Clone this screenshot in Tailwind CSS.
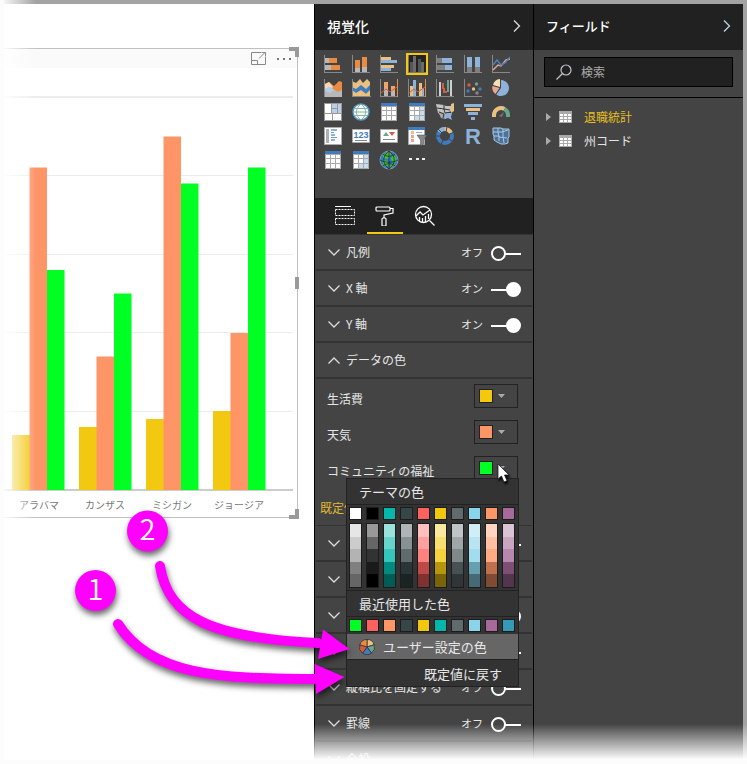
<!DOCTYPE html>
<html lang="ja">
<head>
<meta charset="utf-8">
<meta name="viewport" content="width=device-width, initial-scale=1">
<title>視覚化</title>
<script src="https://cdn.jsdelivr.net/npm/@tailwindcss/browser@4"></script>
</head>
<body class="bg-white font-['Noto_Sans_CJK_JP','Noto_Sans',sans-serif] text-[12px] text-[#e6e6e6]">
<div class="relative flex h-screen overflow-hidden border-t-4 border-r-4 border-[#a3a3a3]">

  <!-- Report canvas -->
  <main class="min-w-0 flex-1 bg-white">
    <section class="relative mt-11 mr-4 border-y border-r border-[#c0c0c0]" aria-label="集合縦棒グラフ">
      <div class="flex h-[19px] items-center justify-end gap-2 bg-[#fafafa] pr-1">
        <button aria-label="フォーカス モード" class="block">
          <svg width="16" height="13" viewBox="0 0 16 13" fill="none" stroke="#888"><path d="M10 .5H.5v12h14V5M.5 8.500h6v4M8 6.500l6-6M10.500.5h4v4"/></svg>
        </button>
        <button aria-label="その他のオプション" class="block">
          <svg width="18" height="4" viewBox="0 0 18 4" fill="#777"><path d="M2 1h2v2H2zM8 1h2v2H8zM14 1h2v2h-2z"/></svg>
        </button>
      </div>
      <svg class="block w-full" viewBox="0 68 297 449">
        <g fill="#ececec"><path d="M0 96h293v2H0zM0 175h293v1H0zM0 254h293v1H0zM0 332h293v1H0zM0 411h293v1H0z"/></g>
        <path d="M0 489h293v2H0z" fill="#ccc"/>
        <g fill="#f2c811"><path d="M12 435h18v55H12zM79 427h18v63H79zM146 419h18v71h-18zM213 411h18v79h-18z"/></g>
        <g fill="#fd9567"><path d="M29.500 167.500H47V490H29.500zM96.500 356.500H114V490H96.500zM163.500 136.500H181V490h-17.500zM230.500 333H248v157h-17.500z"/></g>
        <g fill="#00ff22"><path d="M47 270h17.500v220H47zM114 293.500h17.500V490H114zM181 183.500h17.500V490H181zM248 167.500h17.500V490H248z"/></g>
        <g fill="#777" font-size="10" text-anchor="middle"><text x="39" y="509">アラバマ</text><text x="105" y="509">カンザス</text><text x="172" y="509">ミシガン</text><text x="239" y="509">ジョージア</text></g>
      </svg>
      <span class="absolute -top-[2px] -right-[2px] size-[10px] border-t-4 border-r-4 border-[#999]"></span>
      <span class="absolute top-1/2 -right-[2px] h-3 w-1 -translate-y-1/2 bg-[#999]"></span>
      <span class="absolute -right-[2px] -bottom-[2px] size-[10px] border-r-4 border-b-4 border-[#999]"></span>
    </section>
  </main>

  <!-- Visualizations pane -->
  <aside class="relative w-[219px] shrink-0 border-l border-black bg-[#444]">
    <header class="flex h-[46px] items-center justify-between bg-[#212121] px-3 pb-[2px]">
      <h2 class="text-[14px] font-medium text-white">視覚化</h2>
      <button aria-label="折りたたむ"><svg width="8" height="12" viewBox="0 0 8 12" fill="none" stroke="#ddd" stroke-width="1.300"><path d="M1 .5 6.500 6 1 11.500"/></svg></button>
    </header>

    <div class="grid grid-cols-[repeat(7,28px)] auto-rows-[24px] place-items-center pt-[2px] pb-[26px] pl-1 [&_svg]:block [&_svg]:size-[18px]">
      <button aria-label="積み上げ横棒"><svg viewBox="0 0 18 18"><path d="M0 0h1v17h17v1H0z" fill="#888"/><path d="M1 3h4v5H1zM1 10h6v5H1z" fill="#b8b8b8"/><path d="M5 3h8v5H5zM7 10h9v5H7z" fill="#e98c43"/></svg></button>
      <button aria-label="積み上げ縦棒"><svg viewBox="0 0 18 18"><path d="M0 0h1v17h17v1H0z" fill="#888"/><path d="M3 13h5v4H3zM10 12h5v5h-5z" fill="#b8b8b8"/><path d="M3 5h5v8H3zM10 2h5v10h-5z" fill="#e98c43"/></svg></button>
      <button aria-label="集合横棒"><svg viewBox="0 0 18 18"><path d="M0 0h1v17h17v1H0z" fill="#888"/><path d="M1 2h10v3H1zM1 10h13v3H1z" fill="#ebc182"/><path d="M1 5h16v3H1zM1 13h10v3H1z" fill="#8eb3da"/></svg></button>
      <button aria-label="集合縦棒" aria-pressed="true" class="border-2 border-[#f2c811] bg-[#222]"><svg viewBox="0 0 18 18"><path d="M0 0h1v17h17v1H0z" fill="#777"/><path d="M2 7h3v10H2zM10 4h3v13h-3z" fill="#555"/><path d="M5 1h3v16H5zM13 7h3v10h-3z" fill="#6b6b6b"/></svg></button>
      <button aria-label="100% 積み上げ横棒"><svg viewBox="0 0 18 18"><path d="M0 0h1v17h17v1H0z" fill="#888"/><path d="M1 3h5v5H1zM1 10h8v5H1z" fill="#808080"/><path d="M6 3h10v5H6zM9 10h7v5H9z" fill="#8eb3da"/></svg></button>
      <button aria-label="100% 積み上げ縦棒"><svg viewBox="0 0 18 18"><path d="M0 0h1v17h17v1H0z" fill="#888"/><path d="M3 12h5v5H3zM11 12h5v5h-5z" fill="#808080"/><path d="M3 2h5v10H3zM11 2h5v10h-5z" fill="#8eb3da"/></svg></button>
      <button aria-label="折れ線"><svg viewBox="0 0 18 18" fill="none"><path d="M0 0h1v17h17v1H0z" fill="#888"/><path d="m1 15 5-5 3 1 5-6 4-1" stroke="#e9a48f" stroke-width="1.500"/><path d="m1 10 4-5 4 5 4-2 5-6" stroke="#4a80be" stroke-width="1.500"/></svg></button>

      <button aria-label="面"><svg viewBox="0 0 18 18"><path d="M0 0h1v18H0z" fill="#888"/><path d="M1 5 5 3l5 4 5-5 3 1v13H1z" fill="#e98c43"/><path d="m1 5 4-2 4 5-3 4-5 2z" fill="#f6d9b4"/><path d="m1 10 5-2 5 3 3 2 4-2v7H1z" fill="#b8b8b8"/><path d="m1 10 5-2 4 3-4 3-5-2z" fill="#b2cde8"/></svg></button>
      <button aria-label="リボン"><svg class="overflow-visible" viewBox="0 0 18 18"><path d="M0 2 4 4l4-4 3 4 4-4 3 3v15H0z" fill="#ebc182"/><path d="m0 8 4 2 5-4 5 4 4-4v5l-4 4-5-4-5 3-4-3z" fill="#417bbd"/><path d="m0 12 4 3 5-3 5 3 4-3v5H0z" fill="#ebc182"/><path d="M0 0h1v17h18v1H0z" fill="#888"/></svg></button>
      <button aria-label="折れ線と積み上げ縦棒"><svg viewBox="0 0 18 18"><path d="M0 0h1v17h16v1H0z" fill="#888"/><path d="M17 0h1v18h-1z" fill="#e98c43"/><path d="M4 10h4v7H4zM11 12h4v5h-4z" fill="#b8b8b8"/><path d="M4 3h4v7H4zM11 7h4v5h-4z" fill="#efa36d"/><path d="m1 14 5-4 4 3 7-5" fill="none" stroke="#da5d3b"/></svg></button>
      <button aria-label="折れ線と集合縦棒"><svg viewBox="0 0 18 18"><path d="M0 0h1v17h16v1H0z" fill="#888"/><path d="M17 0h1v18h-1z" fill="#e98c43"/><path d="M2 7h3v10H2zM11 4h3v13h-3z" fill="#ebc182"/><path d="M5 1h3v16H5zM14 9h2v8h-2z" fill="#8eb3da"/><path d="m1 14 5-4 4 3 7-5" fill="none" stroke="#da5d3b"/></svg></button>
      <button aria-label="ウォーターフォール"><svg viewBox="0 0 18 18"><path d="M0 0h1v17h17v1H0z" fill="#888"/><path d="M3 3h2v14H3zM14 1h2v16h-2z" fill="#cfcfcf"/><path d="M6 4h2v6H6zM7 9h2v5H7z" fill="#d65b42"/><path d="M11 1h2v12h-2z" fill="#68a68e"/><path d="M9 12h2v2H9z" fill="#d65b42"/></svg></button>
      <button aria-label="散布図"><svg viewBox="0 0 18 18"><path d="M0 0h1v17h17v1H0z" fill="#888"/><circle cx="5" cy="6" r="1.700" fill="#d65b42"/><circle cx="12.500" cy="5" r="1.700" fill="#68a68e"/><circle cx="4" cy="12" r="1.700" fill="#417bbd"/><circle cx="9.500" cy="10" r="1.700" fill="#ebc182"/><circle cx="16" cy="10" r="1.700" fill="#417bbd"/><circle cx="13" cy="14" r="1.700" fill="#888"/></svg></button>
      <button aria-label="円"><svg viewBox="0 0 18 18"><path d="M9 9V1a8 8 0 1 1-4.700 14.500z" fill="#8eb3da"/><path d="M8 8V0A8 8 0 0 0 1 6z" fill="#f6dfb5"/><path d="M7.500 9 .5 7a8 8 0 0 0 3 8z" fill="#eda48e"/></svg></button>

      <button aria-label="ツリーマップ"><svg viewBox="0 0 18 18"><path d="M0 0h18v18H0z" fill="#999"/><path d="M1 1h6v9H1zM1 11h7v6H1zM9 11h8v6H9z" fill="#fff"/><path d="M8 1h5v4H8zM14 1h3v9h-3zM8 6h5v4H8z" fill="#b9cee8"/></svg></button>
      <button aria-label="マップ"><svg viewBox="0 0 18 18"><circle cx="9" cy="9" r="8" fill="#fff" stroke="#4f94c6" stroke-width="1.500"/><path d="M2 5.500h14M1 9h16M2 12.500h14M9 1C3 5 3 13 9 17M9 1c6 4 6 12 0 16" fill="none" stroke="#80b6a1"/></svg></button>
      <button aria-label="テーブル"><svg viewBox="0 0 18 18"><path d="M1 0h16v18H1z" fill="#aaa"/><path d="M1 0h16v3H1z" fill="#417bbd"/><path d="M2 4h4v3H2zM7 4h4v3H7zM12 4h4v3h-4zM2 8h4v4H2zM7 8h4v4H7zM12 8h4v4h-4zM2 13h4v4H2zM7 13h4v4H7zM12 13h4v4h-4z" fill="#fff"/></svg></button>
      <button aria-label="マトリックス"><svg viewBox="0 0 18 18"><path d="M1 0h16v18H1z" fill="#aaa"/><path d="M1 0h16v3H1z" fill="#417bbd"/><path d="M2 4h4v3H2zM7 4h4v3H7zM2 8h4v4H2zM7 8h4v4H7zM2 13h4v4H2z" fill="#fff"/><path d="M12 4h4v3h-4zM12 8h4v4h-4zM7 13h4v4H7zM12 13h4v4h-4z" fill="#c9dcee"/></svg></button>
      <button aria-label="塗り分け地図"><svg viewBox="0 0 18 18"><path d="m0 1 8 1 2 1h6v5l-5 2-4 3-5-3z" fill="#c4c4c4"/><path d="m2 8 7 2 1 6-5-1z" fill="#aaa"/><path d="m9 10 7 0-1 4 1 3-4-2-3 1z" fill="#8eb3da"/><path d="m15 1 3-1v8l-3 2z" fill="#ebc182"/><path d="m1 5 7 1 1 4 6-1M8 2v4l6 1M3 9l5 2-1 4" stroke="#333" fill="none"/></svg></button>
      <button aria-label="じょうご"><svg viewBox="0 0 18 18"><path d="M0 1h18v3H0zM4 9h10v3H4zM7 14h4v3H7z" fill="#8eb3da"/><path d="M2 5h14v3H2z" fill="#ebc182"/></svg></button>
      <button aria-label="ゲージ"><svg viewBox="0 0 18 18" fill="none"><path d="M2 14v-2a7 7 0 0 1 10.500-6" stroke="#ebc182" stroke-width="4"/><path d="M12.500 6a7 7 0 0 1 3.500 6v2" stroke="#68a68e" stroke-width="4"/><path d="m7 13 5-4-2 5z" fill="#777"/></svg></button>

      <button aria-label="複数の行カード"><svg viewBox="0 0 18 18"><path d="M.5.5h17v17H.5z" fill="#fff" stroke="#aaa"/><path d="M2 2h3v14H2z" fill="#b0b0b0"/><path d="M7 2h6v2H7zM7 7h4v2H7zM7 12h4v2H7z" fill="#8eb3da"/><path d="M7 5h3v1H7zM7 10h6v1H7z" fill="#6a9bcf"/></svg></button>
      <button aria-label="カード"><svg viewBox="0 0 18 18"><path d="M.5 2.500h17v13H.5z" fill="#fff" stroke="#aaa"/><text x="9" y="11" text-anchor="middle" font-family="Liberation Sans" font-weight="bold" font-size="9" fill="#417bbd">123</text><path d="M3 13h12v1H3z" fill="#888"/></svg></button>
      <button aria-label="KPI"><svg viewBox="0 0 18 18"><path d="M.5 2.500h17v13H.5z" fill="#fff" stroke="#aaa"/><path d="m3 9 3-4 3 4z" fill="#68a68e"/><path d="m9 5 3 4 3-4z" fill="#d65b42"/><path d="M3 12h12v1H3z" fill="#888"/></svg></button>
      <button aria-label="スライサー"><svg class="overflow-visible" viewBox="0 0 18 18"><path d="M.5.500h16v17H.5z" fill="#fff" stroke="#aaa"/><path d="M0 0h17v3H0z" fill="#417bbd"/><path d="M3 4h3v3H3z" fill="#ebc182"/><path d="M3 8h3v3H3z" fill="#eda48e"/><path d="M3 12h3v3H3z" fill="#eda48e"/><path d="M8 5h6v1H8z" fill="#8eb3da"/><path d="M9 8h10l-3.500 5v4l-3 2v-6z" fill="#888" stroke="#444" stroke-width=".5"/></svg></button>
      <button aria-label="ドーナツ"><svg viewBox="0 0 18 18" fill="none" stroke-width="4"><circle cx="9" cy="9" r="7" stroke="#417bbd"/><path d="M9 2a7 7 0 0 1 6 4" stroke="#ebc182"/><path d="M3 5a7 7 0 0 1 6-3" stroke="#8eb3da"/><path d="m10 5 1-5M12 8l6-3M13 12l4 3M7 13l-2 5M5 9H0M6 6 2 2" stroke="#444" stroke-width="1"/></svg></button>
      <button aria-label="R スクリプト"><svg class="overflow-visible" viewBox="0 0 18 18"><text x="9" y="17" text-anchor="middle" font-family="Liberation Sans" font-weight="bold" font-size="22" fill="#8eb3da">R</text></svg></button>
      <button aria-label="図形マップ"><svg viewBox="0 0 18 18"><path d="M1 1h8l2 1h6v8l-1 1v5l-3 1-4 0-4-2-3-2V9L1 7z" fill="#4f7398" stroke="#a8c8e8"/><path d="M1 5h9l6-2M6 1v4l1 5 8 1M2 9h5v5M11 2v8l1 6" fill="none" stroke="#a8c8e8"/></svg></button>

      <button aria-label="テーブル 2"><svg viewBox="0 0 18 18"><path d="M1 0h16v18H1z" fill="#aaa"/><path d="M1 0h16v3H1z" fill="#417bbd"/><path d="M2 4h4v3H2zM7 4h4v3H7zM12 4h4v3h-4zM2 8h4v4H2zM7 8h4v4H7zM12 8h4v4h-4zM2 13h4v4H2zM7 13h4v4H7zM12 13h4v4h-4z" fill="#fff"/></svg></button>
      <button aria-label="マトリックス 2"><svg viewBox="0 0 18 18"><path d="M1 0h16v18H1z" fill="#aaa"/><path d="M1 0h16v3H1z" fill="#417bbd"/><path d="M2 4h4v3H2zM7 4h4v3H7zM2 8h4v4H2zM7 8h4v4H7zM2 13h4v4H2z" fill="#fff"/><path d="M12 4h4v3h-4zM12 8h4v4h-4zM7 13h4v4H7zM12 13h4v4h-4z" fill="#c9dcee"/></svg></button>
      <button aria-label="ArcGIS マップ"><svg class="overflow-visible" viewBox="0 0 18 18"><circle cx="9" cy="9" r="9" fill="#2a7fc9" stroke="#bbb" stroke-width=".6"/><path d="m3 4 4-3 4 1-1 4-3 2-4-1zM12 3l4 3 1 5-4 1-2-4zM3 9l5 1 1 4-3 2-3-3zM11 12l4 1-3 4-2-1z" fill="#4fb83a"/><path d="M3 3c3 3 9 3 12 0M0 9c5 3 13 3 18 0M3 15c3-3 9-3 12 0M9 0v18M9 0C2 5 2 13 9 18M9 0c7 5 7 13 0 18" fill="none" stroke="#111" stroke-width=".6"/></svg></button>
      <button aria-label="その他"><svg viewBox="0 0 18 18" fill="#eee"><path d="M1 7h3v2H1zM8 7h3v2H8zM14 7h3v2h-3z"/></svg></button>
    </div>

    <div class="flex h-9 gap-1 bg-[#212121] pl-3" role="tablist">
      <button role="tab" aria-label="フィールド" class="grid w-9 place-items-center"><svg width="20" height="20" viewBox="0 0 20 20" fill="none" stroke="#fff"><path d="M0 .5h16"/><path d="M.5 3.500h19v6H.5zM.5 12.500h19v6H.5z" stroke-dasharray="2 1"/></svg></button>
      <button role="tab" aria-label="書式" aria-selected="true" class="grid w-9 place-items-center border-b-2 border-[#f2c811] pt-[2px]"><svg width="20" height="20" viewBox="0 0 20 20" fill="none" stroke="#fff" stroke-width="1.200"><rect x="1" y="1" width="14" height="4" rx="1"/><path d="M15 2.500h3v4.500l-9 2v3"/><rect x="7" y="12" width="4" height="8" rx="1"/></svg></button>
      <button role="tab" aria-label="分析" class="grid w-9 place-items-center"><svg width="22" height="22" viewBox="0 0 22 22" fill="none" stroke="#fff" stroke-width="1.300"><circle cx="9.500" cy="9.500" r="8"/><path d="m15.500 15.500 5 5M2 11l4-4 3 3 7-5M5.500 16v-4M8.500 17v-4M11.500 17v-6M14.500 14v-5"/></svg></button>
    </div>

    <div class="mx-px border-t border-[#333]">
      <div id="sections-top"></div>
      <div id="data-colors"></div>
      <a href="#" class="block h-[39px] border-b border-[#333] pl-1 leading-[42px] text-[#e0b82e]">既定値に戻す</a>
      <div id="sections-bottom"></div>
    </div>

    <!-- Colour picker -->
    <div class="absolute top-[474px] left-[31px] w-[173px] border border-[#222] bg-[#333] text-[13px] leading-[25px]" role="menu">
      <h3 class="border-b border-[#222] pl-3">テーマの色</h3>
      <div id="theme" class="flex gap-1 px-[2px] pt-[2px]"></div>
      <div id="shades" class="flex gap-1 px-[2px] pt-[3px] pb-[2px]"></div>
      <h3 class="border-y border-[#222] pl-3">最近使用した色</h3>
      <div id="recent" class="flex gap-1 px-[2px] pt-[2px] pb-[2px]"></div>
      <button role="menuitem" class="flex h-[26px] w-full items-center gap-2 border-b border-[#222] bg-[#666] pl-3">
        <svg width="16" height="16" viewBox="-8 -8 16 16" stroke="#333" stroke-width=".8"><path d="M0 0V-7.600A7.600 7.600 0 0 1 7.200-2.300z" fill="#ebc182"/><path d="M0 0 7.200-2.300A7.600 7.600 0 0 1 4.500 6.100z" fill="#68a68e"/><path d="M0 0 4.500 6.100A7.600 7.600 0 0 1-4.500 6.100z" fill="#417bbd"/><path d="M0 0-4.500 6.100A7.600 7.600 0 0 1-7.200-2.300z" fill="#d65b42"/><path d="M0 0-7.200-2.300A7.600 7.600 0 0 1 0-7.600z" fill="#e98c43"/></svg>
        ユーザー設定の色
      </button>
      <button role="menuitem" class="block h-[26px] w-full pr-4 text-right">既定値に戻す</button>
    </div>
    <svg class="absolute top-[459px] left-[182px] drop-shadow-[1px_2px_1px_#000]" width="14" height="20" viewBox="0 0 14 20"><path d="M1 1v15l3.500-3 2.500 6 3-1.300-2.500-5.700H12z" fill="#fff" stroke="#223" stroke-width=".8"/></svg>
  </aside>

  <!-- Fields pane -->
  <aside class="w-[210px] shrink-0 border-l border-black bg-[#444]">
    <header class="flex h-[46px] items-center justify-between bg-[#212121] px-3 pb-[2px]">
      <h2 class="text-[13px] font-medium text-white">フィールド</h2>
      <button aria-label="折りたたむ"><svg width="8" height="12" viewBox="0 0 8 12" fill="none" stroke="#b9d2e8" stroke-width="1.300"><path d="M1 .5 6.500 6 1 11.500"/></svg></button>
    </header>
    <div class="border-b border-black px-[10px] pt-[7px] pb-[10px]">
      <label class="flex h-[30px] items-center gap-[9px] border border-black bg-[#212121] pl-[11px]">
        <svg class="shrink-0" width="16" height="16" viewBox="0 0 16 16" fill="none" stroke="#c0c6cc" stroke-width="1.200"><circle cx="10" cy="6" r="5"/><path d="M6.500 9.500.5 15.500"/></svg>
        <input type="search" aria-label="検索" placeholder="検索" class="w-full min-w-0 bg-transparent outline-none placeholder:text-[#aaa]">
      </label>
    </div>
    <ul class="pt-[7px]">
      <li class="flex h-6 items-center pl-3">
        <svg width="5" height="8" viewBox="0 0 5 8" fill="#aaa"><path d="m0 0 5 4-5 4z"/></svg>
        <svg class="mr-3 ml-2" width="13" height="12" viewBox="0 0 13 12"><path d="M0 0h13v12H0z" fill="#aaa"/><path d="M1 3h3v2H1zM5 3h3v2H5zM9 3h3v2H9zM1 6h3v2H1zM5 6h3v2H5zM9 6h3v2H9zM1 9h3v2H1zM5 9h3v2H5zM9 9h3v2H9z" fill="#fff"/></svg>
        <span class="text-[#e6bf1e]">退職統計</span>
      </li>
      <li class="flex h-6 items-center pl-3">
        <svg width="5" height="8" viewBox="0 0 5 8" fill="#aaa"><path d="m0 0 5 4-5 4z"/></svg>
        <svg class="mr-3 ml-2" width="13" height="12" viewBox="0 0 13 12"><path d="M0 0h13v12H0z" fill="#aaa"/><path d="M1 3h3v2H1zM5 3h3v2H5zM9 3h3v2H9zM1 6h3v2H1zM5 6h3v2H5zM9 6h3v2H9zM1 9h3v2H1zM5 9h3v2H5zM9 9h3v2H9z" fill="#fff"/></svg>
        <span>州コード</span>
      </li>
    </ul>
  </aside>
</div>

<!-- Faded page edges -->
<div class="pointer-events-none absolute inset-y-0 left-0 w-9 bg-linear-to-r from-white to-white/0"></div>
<div class="pointer-events-none absolute inset-x-0 bottom-1 h-9 bg-linear-to-b from-white/0 to-white"></div>
<div class="pointer-events-none absolute inset-x-0 bottom-0 h-1 bg-[#fcfcfc]"></div>
<div class="pointer-events-none absolute inset-y-0 left-0 w-1 bg-[#fcfcfc]"></div>

<!-- Callouts -->
<svg class="pointer-events-none absolute top-0 left-0 drop-shadow-[1px_4px_3px_rgba(0,0,0,0.6)]" width="360" height="764" viewBox="0 0 360 764" fill="#f0f">
  <circle cx="147.500" cy="531" r="20.500"/>
  <circle cx="95.500" cy="590.500" r="20.500"/>
  <g fill="none" stroke="#f0f" stroke-width="10" stroke-linecap="round"><path d="M160 566C168 618 212 638 318 643"/><path d="M118 624C150 675 218 679 314 679"/></g>
  <path d="m323 629.500 26.500 19.500L318 659zM314.500 664l30 13-28.500 17z"/>
</svg>
<svg class="pointer-events-none absolute top-0 left-0" width="360" height="764" viewBox="0 0 360 764" fill="#fff" font-size="29" font-weight="350" text-anchor="middle">
  <text x="147.500" y="540">2</text>
  <text x="95.500" y="600">1</text>
</svg>

<script>
const chevron = up => `<svg width="12" height="7" viewBox="0 0 12 7" fill="none" stroke="#ddd" stroke-width="1.300"><path d="${up ? 'M.5 6.500 6 1l5.500 5.500' : 'M.5.500 6 6l5.500-5.500'}"/></svg>`;
const section = ([name, state]) => `
  <div class="flex h-9 items-center border-b-2 border-[#333] pr-[11px] pl-3">
    <button class="flex flex-1 items-center gap-[6px] text-left">${chevron(state === 'open')}${name}</button>
    ${state === 'on' || state === 'off' ? `<label class="flex items-center gap-2 text-[11px]">${state === 'on' ? 'オン' : 'オフ'}
      <input type="checkbox" role="switch" aria-label="${name}" ${state === 'on' ? 'checked' : ''} class="relative top-px h-[15px] w-[30px] appearance-none before:absolute before:top-[7px] before:right-0 before:h-[2px] before:w-4 before:bg-white after:absolute after:top-0 after:left-0 after:size-[15px] after:rounded-full after:border-2 after:border-white checked:before:right-[14px] checked:after:left-[15px] checked:after:bg-white">
    </label>` : ''}
  </div>`;
document.getElementById('sections-top').innerHTML =
  [['凡例', 'off'], ['X 軸', 'on'], ['Y 軸', 'on'], ['データの色', 'open']].map(section).join('');
document.getElementById('sections-bottom').innerHTML =
  [['データ ラベル', 'off'], ['プロット エリア', ''], ['タイトル', 'on'], ['背景', 'off'], ['縦横比を固定する', 'off'], ['罫線', 'off'], ['全般', '']].map(section).join('');

document.getElementById('data-colors').innerHTML =
  [['生活費', '#f2c811'], ['天気', '#fd9567'], ['コミュニティの福祉', '#00ff22']].map(([name, color]) => `
  <div class="flex h-9 items-start justify-between pt-[5px] pr-[14px] pl-[11px]">
    <span class="leading-[30px]">${name}</span>
    <button aria-label="${name}の色" class="flex h-6 w-11 items-center gap-[5px] border border-[#222] pl-1">
      <span class="size-[14px] border border-[#222]" style="background:${color}"></span>
      <svg width="7" height="4" viewBox="0 0 7 4" fill="#aaa"><path d="M0 0h7L3.500 4z"/></svg>
    </button>
  </div>`).join('');

const swatch = c => `<button aria-label="${c}" class="size-[13px] border border-[#1c1c1c]" style="background:${c}"></button>`;
document.getElementById('theme').innerHTML =
  ['#ffffff', '#000000', '#01b8aa', '#374649', '#fd625e', '#f2c80f', '#5f6b6d', '#8ad4eb', '#fe9666', '#a66999'].map(swatch).join('');
document.getElementById('recent').innerHTML =
  ['#00ff22', '#fd625e', '#fe9666', '#374649', '#f2c80f', '#01b8aa', '#5f6b6d', '#8ad4eb', '#a66999', '#3599b8'].map(swatch).join('');
document.getElementById('shades').innerHTML = [
  ['#e6e6e6', '#cccccc', '#b3b3b3', '#808080', '#666666'],
  ['#999999', '#666666', '#333333', '#1a1a1a', '#000000'],
  ['#99e3dd', '#67d4cc', '#34c6bb', '#018a80', '#015c55'],
  ['#afb5b6', '#879092', '#5f6b6d', '#293537', '#1c2325'],
  ['#fec0bf', '#fea19e', '#fd817e', '#be4a47', '#7f312f'],
  ['#fae99f', '#f7de6f', '#f5d33f', '#b6960b', '#796408'],
  ['#bfc4c5', '#9fa6a7', '#7f898a', '#475052', '#303637'],
  ['#d0eef7', '#b9e5f3', '#a1ddef', '#689fb0', '#456a76'],
  ['#ffd5c2', '#fec0a3', '#feab85', '#bf714d', '#7f4b33'],
  ['#dbc3d6', '#caa5c2', '#b887ad', '#7d4f73', '#53354d']
].map(col => `<div class="flex h-[65px] w-[13px] flex-col border border-[#1c1c1c]">${col.map(c => `<button aria-label="${c}" class="flex-1" style="background:${c}"></button>`).join('')}</div>`).join('');
</script>
</body>
</html>
